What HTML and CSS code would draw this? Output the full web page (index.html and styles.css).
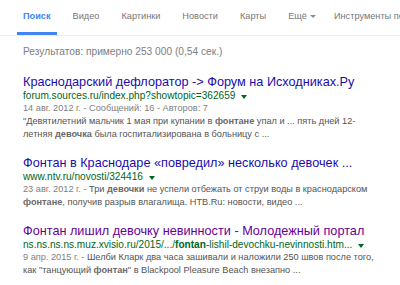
FILE: index.html
```html
<!DOCTYPE html>
<html>
	<head>
		<meta charset="utf-8">
		<title>фонтан девочка - Поиск</title>
		<link rel="stylesheet" href="styles.css">
	</head>
	<body>
		<div class="tabs">
			<a href="javascript:void(0)" class="tab active">Поиск</a>
			<a href="javascript:void(0)" class="tab">Видео</a>
			<a href="javascript:void(0)" class="tab">Картинки</a>
			<a href="javascript:void(0)" class="tab">Новости</a>
			<a href="javascript:void(0)" class="tab">Карты</a>
			<a href="javascript:void(0)" class="tab more">Ещё<i class="drop"></i></a>
			<a href="javascript:void(0)" class="tab tools">Инструменты поиска</a>
		</div>
		<div class="content">
			<div class="stats">Результатов: примерно 253 000 (0,54 сек.)</div>

			<div class="result">
				<a href="javascript:void(0)" class="title">Краснодарский дефлоратор -&gt; Форум на Исходниках.Ру</a>
				<div class="url"><cite>forum.sources.ru/index.php?showtopic=362659</cite><i class="caret"></i></div>
				<div class="snippet">
					<span class="date">14 авг. 2012 г. - Сообщений: 16 - Авторов: 7</span><br>
					"Девятилетний мальчик 1 мая при купании в <b>фонтане</b> упал и ... пять дней 12-<br>
					летняя <b>девочка</b> была госпитализирована в больницу с ...
				</div>
			</div>

			<div class="result">
				<a href="javascript:void(0)" class="title">Фонтан в Краснодаре «повредил» несколько девочек ...</a>
				<div class="url"><cite>www.ntv.ru/novosti/324416</cite><i class="caret"></i></div>
				<div class="snippet">
					<span class="date">23 авг. 2012 г. - </span>Три <b>девочки</b> не успели отбежать от струи воды в краснодарском<br>
					<b>фонтане</b>, получив разрыв влагалища. НТВ.Ru: новости, видео ...
				</div>
			</div>

			<div class="result">
				<a href="javascript:void(0)" class="title visited">Фонтан лишил девочку невинности - Молодежный портал</a>
				<div class="url"><cite>ns.ns.ns.ns.muz.xvisio.ru/2015/.../<b>fontan</b>-lishil-devochku-nevinnosti.htm...</cite><i class="caret"></i></div>
				<div class="snippet">
					<span class="date">9 апр. 2015 г. - </span>Шелби Кларк два часа зашивали и наложили 250 швов после того,<br>
					как "танцующий <b>фонтан</b>" в Blackpool Pleasure Beach внезапно ...
				</div>
			</div>
		</div>
	</body>
</html>
```

FILE: styles.css
```css
*{margin:0;padding:0;}
a{text-decoration:none;}
html,body{background:#fff;overflow:hidden;}
body{font-family:"Liberation Sans",Arial,sans-serif;color:#545454;}

.tabs{display:flex;padding-left:17px;border-bottom:1px solid #ebebeb;white-space:nowrap;}
.tabs>.tab{display:block;font-size:9.2px;line-height:12px;color:#777;padding:10px 6px 10px;border-bottom:3px solid transparent;margin-right:10px;}
.tabs>.tab.active{color:#4285f4;font-weight:bold;border-bottom-color:#4285f4;}
.tabs>.tab.more{display:flex;align-items:center;margin-right:6px;}
.tabs>.tab>.drop{display:block;margin-left:3px;border-left:3px solid transparent;border-right:3px solid transparent;border-top:3px solid #8c8c8c;}

.content{padding-left:23px;white-space:nowrap;}
.stats{font-size:10.2px;line-height:13px;color:#808080;margin-top:9px;}

.result{margin-top:16px;}
.result+.result{margin-top:14px;}
.result>.title{display:block;font-size:12.7px;line-height:16px;color:#1a0dab;}
.result>.title.visited{color:#609;}
.result>.url{display:flex;align-items:center;font-size:10.1px;line-height:12px;}
.result>.url>cite{font-style:normal;color:#006621;}
.result>.url>.caret{display:block;margin-left:6px;margin-top:1px;border-left:3px solid transparent;border-right:3px solid transparent;border-top:4px solid #006621;}
.result>.snippet{font-size:9.2px;line-height:13px;color:#545454;}
.result>.snippet b{color:#6a6a6a;}
.result>.snippet>.date{color:#808080;}
```
